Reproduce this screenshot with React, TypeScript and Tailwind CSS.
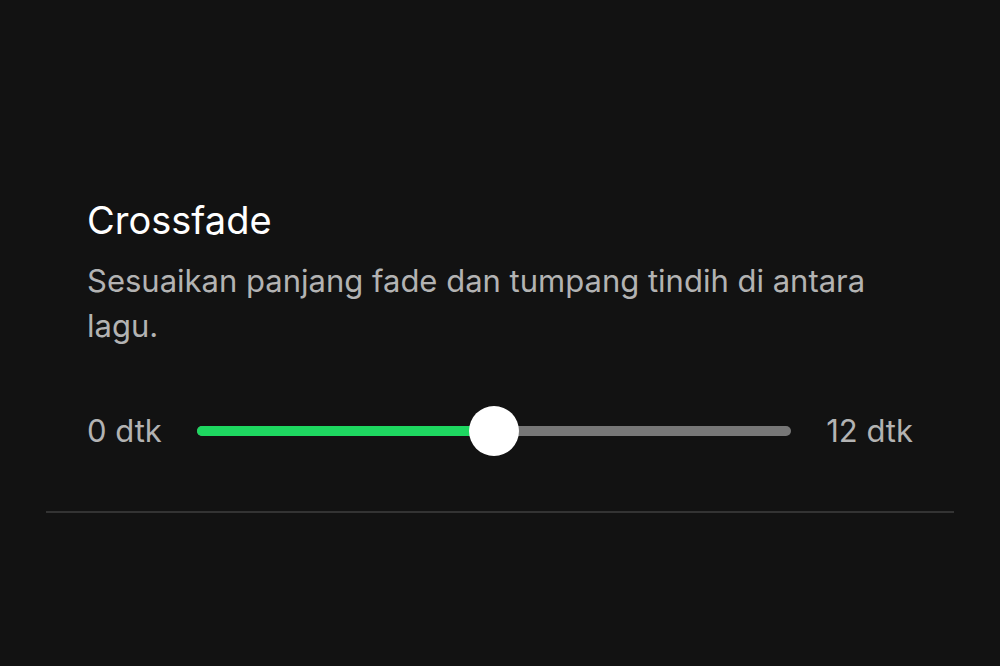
const value = 6;
const max = 12;

export default function App() {
  const pct = (value / max) * 100;
  return (
    <div className="w-[1000px] h-[666px] bg-[#121212] font-['Inter',sans-serif] overflow-hidden">
      <div className="mx-[46px] pt-[196px] border-b-2 border-[#333333] pb-[54px]">
        <div className="px-[41px]">
          <h2 className="text-[38px] leading-[48px] text-white">Crossfade</h2>
          <p className="mt-[14px] text-[31px] leading-[45px] text-[#b3b3b3] pr-[20px]">
            Sesuaikan panjang fade dan tumpang tindih di antara lagu.
          </p>
          <div className="mt-[57px] flex items-center gap-[35px] h-[52px]">
            <span className="text-[31px] text-[#b3b3b3]">0 dtk</span>
            <div className="relative flex-1 h-[10px] rounded-full bg-[#777777]">
              <div className="h-full rounded-full bg-[#1ed760]" style={{ width: `${pct}%` }} />
              <div
                className="absolute top-1/2 w-[50px] h-[50px] -translate-x-1/2 -translate-y-1/2 rounded-full bg-white"
                style={{ left: `${pct}%` }}
              />
            </div>
            <span className="text-[31px] text-[#b3b3b3]">12 dtk</span>
          </div>
        </div>
      </div>
    </div>
  );
}
